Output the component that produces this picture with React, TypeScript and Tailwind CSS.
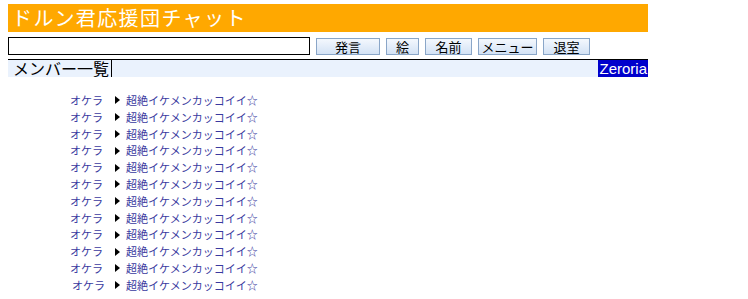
import { Fragment } from "react";

const members = Array.from({ length: 12 }, () => ({ name: "オケラ", comment: "超絶イケメンカッコイイ☆" }));

const buttons = [
  { label: "発言", w: "w-[64px]" },
  { label: "絵", w: "w-[33px]" },
  { label: "名前", w: "w-[47px]" },
  { label: "メニュー", w: "w-[59px]" },
  { label: "退室", w: "w-[47px]" },
];

const App = () => {
  return (
    <div className="min-h-screen bg-white pt-1 pl-2 text-[12px] font-['Noto_Sans_CJK_JP','Liberation_Sans',sans-serif]">
      <div className="w-[640px]">
        {/* Title */}
        <div className="h-[28px] bg-[#ffa800] pl-1 text-[20px] leading-[28px] tracking-[1.4px] text-white">
          ドルン君応援団チャット
        </div>

        {/* Input row */}
        <div className="mt-[5px] flex h-[18px] items-center">
          <input className="h-[18px] w-[302px] border border-black bg-white outline-none" />
          <div className="ml-[6px] flex gap-[6px]">
            {buttons.map((b) => (
              <button
                key={b.label}
                className={`${b.w} h-[17px] border border-[#8aa6c8] bg-gradient-to-b from-[#f4f8fd] to-[#d3e2f5] text-[13px] leading-[15px] text-black`}
              >
                {b.label}
              </button>
            ))}
          </div>
        </div>

        {/* Member bar */}
        <div className="mt-[4px] flex h-[18px] items-center border-t border-black bg-[#eaf2fd]">
          <div className="h-full border-r border-black pl-[5px] pr-[2px] text-[16px] leading-[17px] text-black">
            メンバー一覧
          </div>
          <div className="flex-1" />
          <div className="bg-[#0000cc] px-[1px] text-[15px] leading-[17px] text-white font-['Liberation_Sans',sans-serif]">
            Zeroria
          </div>
        </div>

        {/* Member list */}
        <div className="mt-[15px] grid grid-cols-[auto_auto_auto] justify-start gap-x-[6px] pl-[62px] text-[11px] leading-[16.8px] text-[#3a3aa0]">
          {members.map((m, i) => (
            <Fragment key={i}>
              <span className={i === members.length - 1 ? "pl-[2px]" : ""}>{m.name}</span>
              <span className="flex items-center pl-[4px]">
                <svg width="5" height="8" viewBox="0 0 5 8">
                  <path d="M0 0 L5 4 L0 8 Z" fill="#000" />
                </svg>
              </span>
              <span>{m.comment}</span>
            </Fragment>
          ))}
        </div>
      </div>
    </div>
  );
};

export default App;
